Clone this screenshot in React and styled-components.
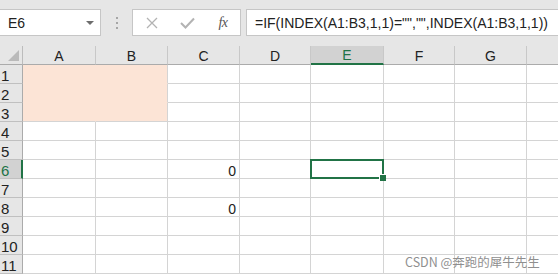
import React from "react";
import styled, { createGlobalStyle } from "styled-components";

const Global = createGlobalStyle`
  html, body { margin: 0; padding: 0; background: #fff; overflow: hidden; }
  body { font-family: "Liberation Sans", Arial, sans-serif; }
`;

const Page = styled.div`
  position: relative;
  width: 558px;
  height: 274px;
  overflow: hidden;
  background: #fff;
`;

const Toolbar = styled.div`
  height: 46px;
  box-sizing: border-box;
  background: #e6e6e6;
  padding-top: 9px;
  display: flex;
  align-items: flex-start;
`;

const NameBox = styled.div`
  width: 101px;
  height: 27px;
  box-sizing: border-box;
  background: #fff;
  border: 1px solid #c6c6c6;
  border-left: none;
  display: flex;
  align-items: center;
  justify-content: space-between;
  padding: 0 6px 0 8px;
  font-size: 14px;
  color: #222;
`;

const Caret = styled.span`
  width: 0;
  height: 0;
  border-left: 4px solid transparent;
  border-right: 4px solid transparent;
  border-top: 4px solid #6d6d6d;
`;

const Grip = styled.div`
  width: 31px;
  height: 27px;
  display: flex;
  flex-direction: column;
  align-items: center;
  justify-content: center;
  gap: 3px;
  span {
    width: 2px;
    height: 2px;
    background: #a6a6a6;
  }
`;

const FxBox = styled.div`
  width: 109px;
  height: 27px;
  box-sizing: border-box;
  background: #fff;
  border: 1px solid #c6c6c6;
  display: flex;
  align-items: center;
  padding-left: 11px;
`;

const FxBtn = styled.div`
  width: ${(p) => p.w}px;
  display: flex;
  align-items: center;
  justify-content: center;
`;

const FxText = styled.span`
  font-family: "Liberation Serif", "Times New Roman", serif;
  font-style: italic;
  font-size: 14px;
  color: #555;
  letter-spacing: -0.5px;
`;

const FormulaBox = styled.div`
  margin-left: 5px;
  flex: 1;
  height: 27px;
  box-sizing: border-box;
  background: #fff;
  border: 1px solid #c6c6c6;
  border-right: none;
  display: flex;
  align-items: center;
  padding-left: 8px;
  font-size: 14px;
  color: #222;
  white-space: nowrap;
`;

const WIDTHS = [23, 73, 72, 72, 71, 73, 71, 72, 40];
const COLS = ["A", "B", "C", "D", "E", "F", "G", ""];

const Grid = styled.div`
  display: grid;
  grid-template-columns: ${WIDTHS.map((w) => w + "px").join(" ")};
  grid-auto-rows: 19px;
`;

const Corner = styled.div`
  position: relative;
  background: #e6e6e6;
  border-right: 1px solid #bcbcbc;
  border-bottom: 1px solid #ababab;
  box-sizing: border-box;
  &::after {
    content: "";
    position: absolute;
    right: 3px;
    bottom: 3px;
    width: 0;
    height: 0;
    border-left: 11px solid transparent;
    border-bottom: 11px solid #bababa;
  }
`;

const ColHead = styled.div`
  box-sizing: border-box;
  background: ${(p) => (p.active ? "#d2d2d2" : "#e6e6e6")};
  border-right: 1px solid #c8c8c8;
  border-bottom: ${(p) => (p.active ? "2px solid #217346" : "1px solid #ababab")};
  display: flex;
  align-items: center;
  justify-content: center;
  font-size: 14px;
  color: ${(p) => (p.active ? "#217346" : "#222")};
  padding-top: 1px;
`;

const RowHead = styled.div`
  box-sizing: border-box;
  background: ${(p) => (p.active ? "#d2d2d2" : "#e6e6e6")};
  border-right: ${(p) => (p.active ? "2px solid #217346" : "1px solid #ababab")};
  border-bottom: 1px solid #c0c0c0;
  display: flex;
  align-items: center;
  justify-content: flex-start;
  padding-left: 1px;
  font-size: 15px;
  color: ${(p) => (p.active ? "#217346" : "#222")};
  padding-top: 2px;
`;

const Cell = styled.div`
  position: relative;
  box-sizing: border-box;
  background: ${(p) => (p.fill ? "#fce4d6" : "#fff")};
  border-right: 1px solid ${(p) => (p.fillRight ? "#fce4d6" : "#d4d4d4")};
  border-bottom: 1px solid ${(p) => (p.fillBottom ? "#fce4d6" : "#d4d4d4")};
  display: flex;
  align-items: center;
  justify-content: flex-end;
  padding: 4px 3px 0 0;
  font-size: 14px;
  color: #222;
`;

const Selection = styled.div`
  position: absolute;
  left: -1px;
  top: -1px;
  right: -1px;
  bottom: -1px;
  border: 2px solid #217346;
  pointer-events: none;
  z-index: 2;
  &::after {
    content: "";
    position: absolute;
    right: -4px;
    bottom: -4px;
    width: 6px;
    height: 6px;
    background: #217346;
    border: 1px solid #fff;
    border-right: none;
    border-bottom: none;
  }
`;

const Watermark = styled.div`
  position: absolute;
  left: 405px;
  top: 252px;
  font-family: "Noto Sans CJK SC", "Noto Sans", sans-serif;
  font-size: 12.5px;
  color: #8f8f8f;
  white-space: nowrap;
  z-index: 3;
`;

const values = { "6-2": "0", "8-2": "0" };

export default function App() {
  const rows = Array.from({ length: 11 }, (_, i) => i + 1);
  return (
    <Page>
      <Global />
      <Toolbar>
        <NameBox>
          <span>E6</span>
          <Caret />
        </NameBox>
        <Grip>
          <span />
          <span />
          <span />
        </Grip>
        <FxBox>
          <FxBtn w={15}>
            <svg width="12" height="12" viewBox="0 0 12 12">
              <path d="M1 1 L11 11 M11 1 L1 11" stroke="#b3b3b3" strokeWidth="1.3" fill="none" />
            </svg>
          </FxBtn>
          <FxBtn w={57}>
            <svg width="15" height="12" viewBox="0 0 15 12">
              <path d="M1 6 L5.5 10.5 L14 1.5" stroke="#b3b3b3" strokeWidth="2" fill="none" />
            </svg>
          </FxBtn>
          <FxBtn w={14}>
            <FxText>fx</FxText>
          </FxBtn>
        </FxBox>
        <FormulaBox>=IF(INDEX(A1:B3,1,1)="","",INDEX(A1:B3,1,1))</FormulaBox>
      </Toolbar>
      <Grid>
        <Corner />
        {COLS.map((c, i) => (
          <ColHead key={"h" + i} active={c === "E"}>
            {c}
          </ColHead>
        ))}
        {rows.map((r) => (
          <React.Fragment key={r}>
            <RowHead active={r === 6}>{r}</RowHead>
            {COLS.map((c, ci) => {
              const fill = r <= 3 && ci <= 1;
              return (
                <Cell
                  key={c + r + ci}
                  fill={fill}
                  fillRight={fill && ci === 0}
                  fillBottom={fill && r < 3}
                >
                  {values[`${r}-${ci}`]}
                  {r === 6 && c === "E" && <Selection />}
                </Cell>
              );
            })}
          </React.Fragment>
        ))}
      </Grid>
      <Watermark>CSDN @奔跑的犀牛先生</Watermark>
    </Page>
  );
}
